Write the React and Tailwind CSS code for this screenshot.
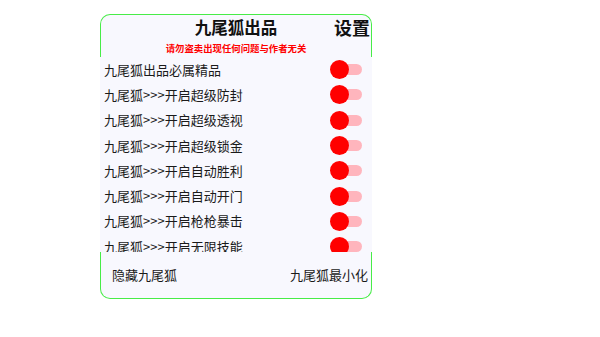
const rows = [
  "九尾狐出品必属精品",
  "九尾狐>>>开启超级防封",
  "九尾狐>>>开启超级透视",
  "九尾狐>>>开启超级锁金",
  "九尾狐>>>开启自动胜利",
  "九尾狐>>>开启自动开门",
  "九尾狐>>>开启枪枪暴击",
  "九尾狐>>>开启无限技能",
];

const font = { fontFamily: '"Noto Sans CJK SC", "Noto Sans", sans-serif' };

const Toggle = () => (
  <div className="relative h-[19px] w-[32px] shrink-0">
    <div className="absolute right-0 top-[4px] h-[11px] w-[29px] rounded-full bg-[#ffb5bd]" />
    <div className="absolute left-0 top-0 h-[19px] w-[19px] rounded-full bg-[#ff0000]" />
  </div>
);

export default function App() {
  return (
    <div className="h-[337px] w-[600px] bg-white" style={font}>
      <div className="ml-[100px] flex w-[272px] flex-col pt-[14px]">
        <div className="h-[43px] rounded-t-[10px] border-x-[1.5px] border-t-[1.5px] border-[#48ec48] bg-[#f8f8fe]">
          <div className="grid grid-cols-[1fr_auto_1fr] items-center pt-[1px]">
            <div />
            <div className="text-[16.5px] font-bold leading-[22px] text-[#111]">九尾狐出品</div>
            <div className="justify-self-end pr-[1px] text-[18px] font-bold leading-[22px] text-[#111]">设置</div>
          </div>
          <div className="mt-[4px] text-center text-[9.4px] font-bold leading-[12px] text-[#ff0000]">
            请勿盗卖出现任何问题与作者无关
          </div>
        </div>
        <div className="h-[195px] overflow-hidden bg-[#f8f8fe]">
          {rows.map((r) => (
            <div key={r} className="flex h-[25.3px] items-center justify-between pl-[4px] pr-[10px]">
              <span className="text-[13px] leading-[18px] text-[#1a1a1a]">{r}</span>
              <Toggle />
            </div>
          ))}
        </div>
        <div className="flex h-[47px] items-center justify-between rounded-b-[10px] border-x-[1.5px] border-b-[1.5px] border-[#48ec48] bg-[#f8f8fe] pb-[1px] pl-[11px] pr-[3px]">
          <span className="text-[13px] leading-[18px] text-[#1a1a1a]">隐藏九尾狐</span>
          <span className="text-[13px] leading-[18px] text-[#1a1a1a]">九尾狐最小化</span>
        </div>
      </div>
    </div>
  );
}
